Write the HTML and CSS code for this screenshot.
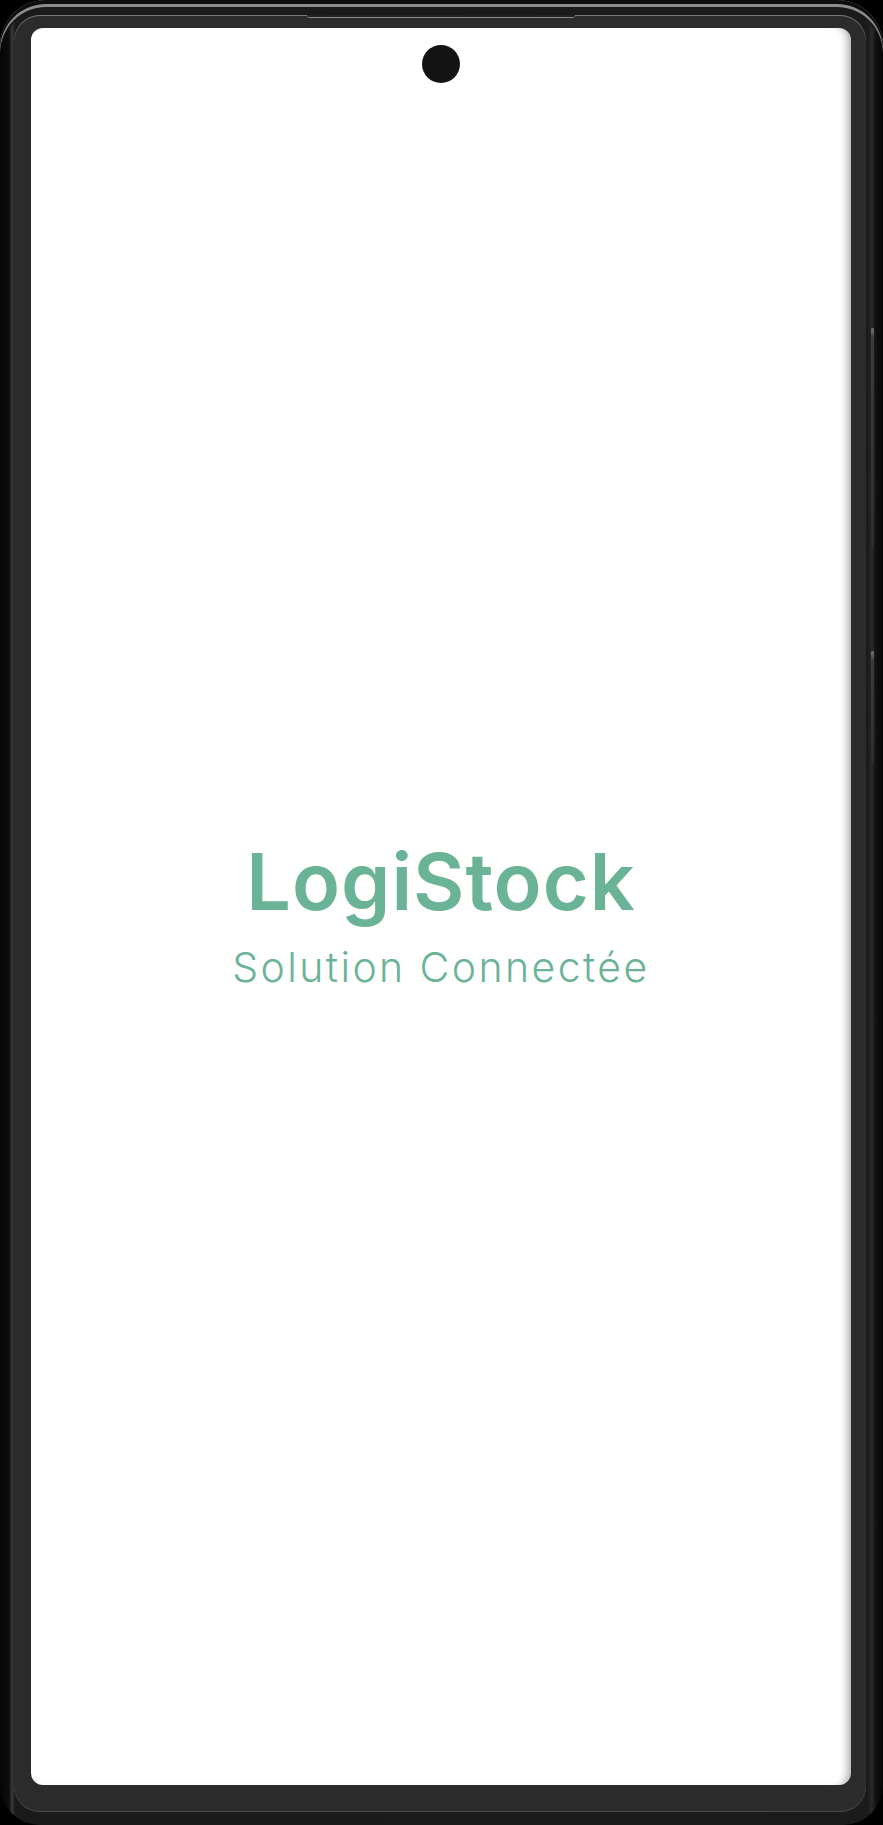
FILE: index.html
```html
<!DOCTYPE html>
<html lang="fr">
<head>
<meta charset="utf-8">
<title>LogiStock</title>
<link rel="stylesheet" href="styles.css">
</head>
<body>
<div class="phone">
  <div class="side-btn side-btn-vol"></div>
  <div class="side-btn side-btn-power"></div>
  <div class="frame">
    <div class="speaker"></div>
    <div class="screen">
      <div class="camera"></div>
      <div class="splash">
        <h1 class="brand">LogiStock</h1>
        <p class="tagline">Solution Connectée</p>
      </div>
    </div>
  </div>
</div>
</body>
</html>
```
FILE: styles.css
```css
* { box-sizing: border-box; }
html, body { margin: 0; padding: 0; height: 100%; }
body {
  background: #000;
  font-family: "Inter", "Liberation Sans", sans-serif;
}
.phone {
  position: relative;
  height: 1825px;
  width: 883px;
  padding: 15px 17px 13px 14px;
  border-radius: 46px 46px 40px 40px;
  background: linear-gradient(to right, #060606 0px, #0c0c0c 9px, #3a3a3a 12px, #1a1a1a 15px, #1b1b1b 868px, #2a2a2a 872px, #111 876px, #050505 883px);
  box-shadow: inset 0 4px 0 #0d0d0d, inset 0 7px 0 #8c8c8c, inset 0 10px 0 #1a1a1a;
}
.frame {
  position: relative;
  height: 100%;
  border-radius: 26px;
  background: #2b2b2b;
  padding: 13px 15px 27px 17px;
  box-shadow: inset 0 1px 0 #7a7a7a, inset 0 -1px 0 #4a4a4a;
}
.speaker {
  position: absolute;
  top: 0;
  left: 293px;
  width: 268px;
  height: 3px;
  border-radius: 0 0 3px 3px;
  background: #222;
  border-bottom: 1px solid #8a8a8a;
}
.screen {
  position: relative;
  height: 100%;
  background: #fff;
  border-radius: 12px;
  box-shadow: inset -9px 0 8px -6px rgba(0,0,0,0.35);
  display: flex;
  align-items: center;
  justify-content: center;
}
.camera {
  position: absolute;
  top: 17px;
  left: 391px;
  width: 38px;
  height: 38px;
  border-radius: 50%;
  background: #131313;
}
.splash {
  display: flex;
  flex-direction: column;
  align-items: center;
  padding-top: 16px;
}
.brand {
  margin: 0;
  font-family: "Inter", "Liberation Sans", sans-serif;
  font-weight: 600;
  font-size: 79px;
  line-height: 1;
  letter-spacing: 1px;
  color: #6bb397;
}
.tagline {
  margin: 26px 0 0;
  font-family: "Inter", "Liberation Sans", sans-serif;
  font-weight: 300;
  font-size: 41px;
  line-height: 1;
  letter-spacing: 2.4px;
  color: #6bb397;
}
.side-btn {
  position: absolute;
  right: 9px;
  width: 3px;
  background: linear-gradient(to bottom, #7a7a7a, #3a3a3a 10px, #2e2e2e);
  border-radius: 2px;
}
.side-btn-vol { top: 328px; height: 220px; }
.side-btn-power { top: 651px; height: 112px; }
```
